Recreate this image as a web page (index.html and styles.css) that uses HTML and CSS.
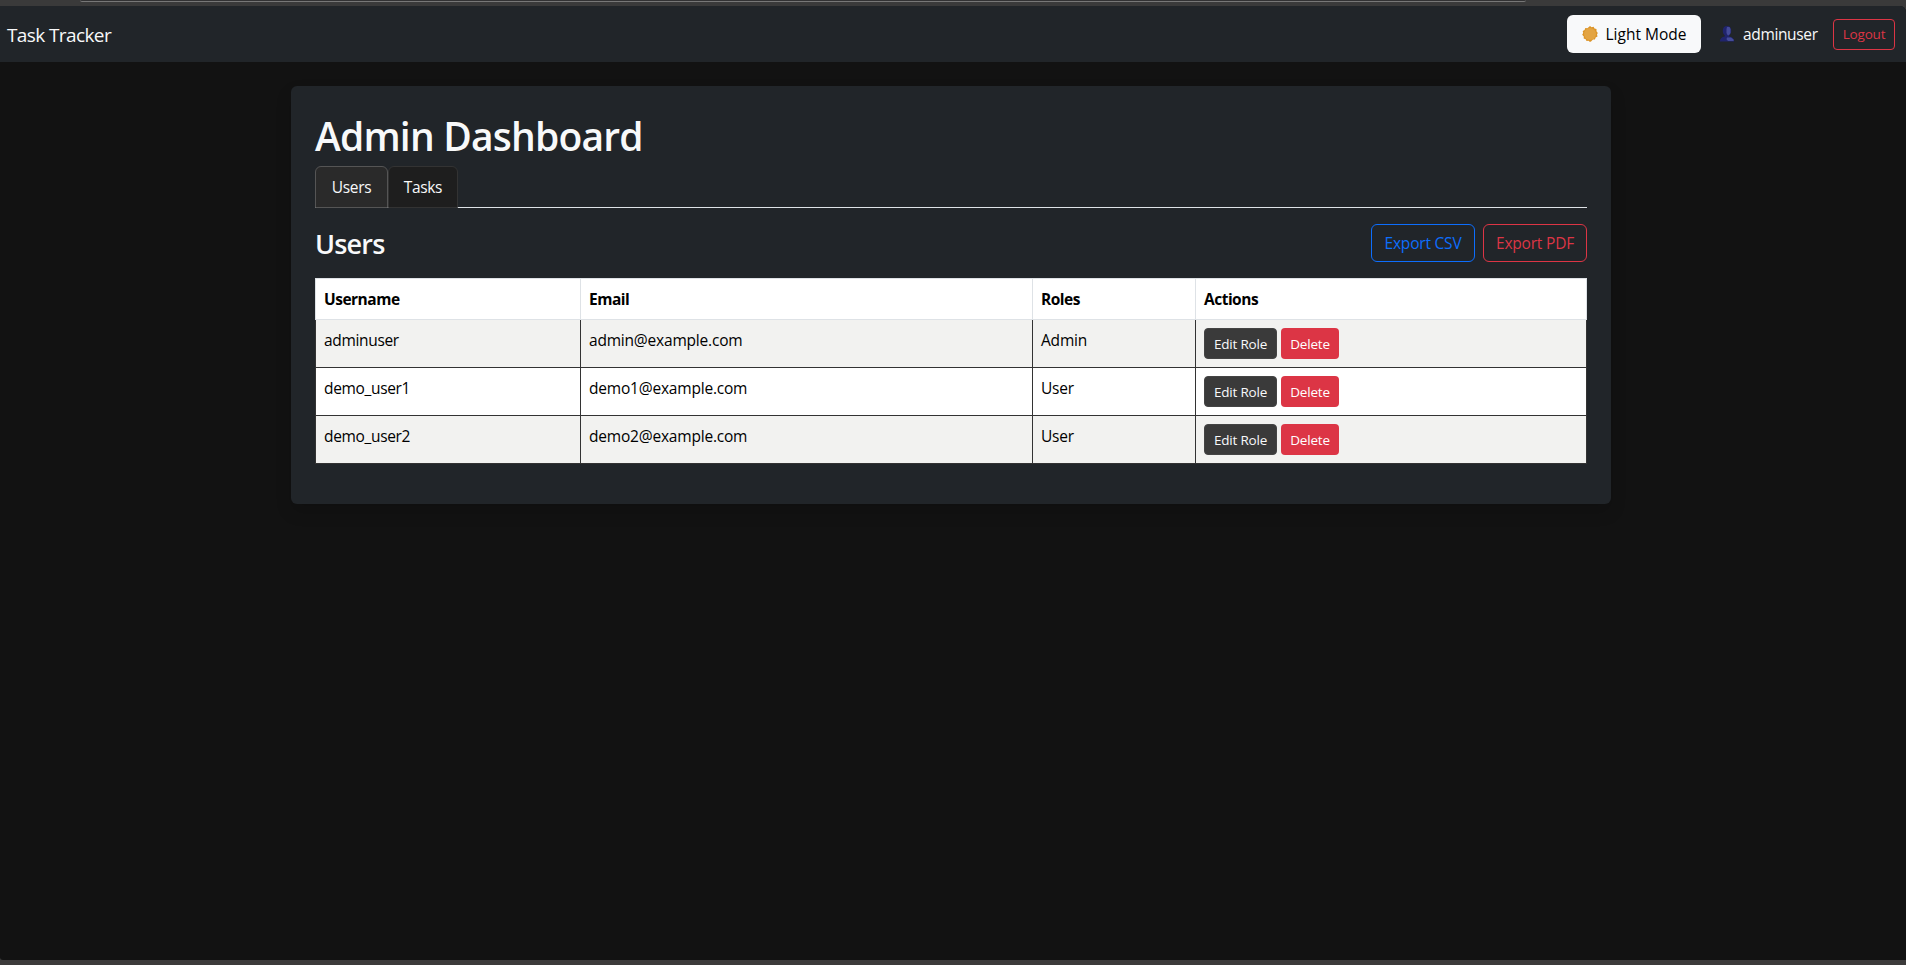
FILE: index.html
```html
<!DOCTYPE html>
<html lang="en">
<head>
<meta charset="utf-8">
<title>Task Tracker</title>
<link rel="stylesheet" href="styles.css">
</head>
<body>
<div class="chrome-top"><div class="address"></div></div>
<div class="page">
  <nav class="navbar">
    <a class="brand">Task Tracker</a>
    <div class="nav-right">
      <button class="btn btn-light">
        <svg class="sun" width="16" height="16" viewBox="0 0 16 16"><path fill="#dc9427" d="M8 0l1.600 1.200 2-.5.9 1.800 2 .6v2.100L15.800 7l-.8 1.600.5 2-1.900.9-.6 2-2.100 0L9.300 15.200 8 16l-1.500-1.200-2 .3-.8-1.900-2-.7.1-2.100L.2 8.800 1.200 7.100.7 5l1.900-.9.7-2 2.100.1z"/><circle cx="8" cy="8" r="6" fill="#e3a442"/></svg>
        <span class="t-mode">Light Mode</span>
      </button>
      <span class="account">
        <svg class="person" width="16" height="16" viewBox="0 0 16 16"><path fill="#20246c" d="M8 0c2.800 0 4.200 2 4.200 4.700 0 2-.8 3.500-1.900 4.500v1.200c2.800.5 4.700 1.900 4.900 5.100H.8c.2-3.200 2.200-4.600 4.900-5.100V9.200C4.500 8.200 3.800 6.700 3.800 4.700 3.800 2 5.200 0 8 0z"/><path fill="#444b99" d="M8 1h2.500l1 2v4L10 9.300H8.600L7.500 7V3zM8 11.500h4l2.600 2v1.500H9L7.500 13.300z"/></svg>
        <span class="t-account">adminuser</span>
      </span>
      <button class="btn btn-sm btn-outline-danger logout">Logout</button>
    </div>
  </nav>
  <main class="card">
    <h1>Admin Dashboard</h1>
    <div class="tabs">
      <a class="tab tab-users active">Users</a>
      <a class="tab tab-tasks">Tasks</a>
    </div>
    <div class="section-head">
      <h3>Users</h3>
      <div class="exports">
        <button class="btn btn-outline-primary">Export CSV</button>
        <button class="btn btn-outline-danger">Export PDF</button>
      </div>
    </div>
    <table class="users">
      <colgroup><col class="c-name"><col class="c-email"><col class="c-role"><col class="c-act"></colgroup>
      <thead><tr><th>Username</th><th>Email</th><th>Roles</th><th>Actions</th></tr></thead>
      <tbody>
        <tr><td>adminuser</td><td>admin@example.com</td><td>Admin</td><td><div class="actions"><button class="btn btn-sm btn-edit">Edit Role</button><button class="btn btn-sm btn-delete">Delete</button></div></td></tr>
        <tr><td>demo_user1</td><td>demo1@example.com</td><td>User</td><td><div class="actions"><button class="btn btn-sm btn-edit">Edit Role</button><button class="btn btn-sm btn-delete">Delete</button></div></td></tr>
        <tr><td>demo_user2</td><td>demo2@example.com</td><td>User</td><td><div class="actions"><button class="btn btn-sm btn-edit">Edit Role</button><button class="btn btn-sm btn-delete">Delete</button></div></td></tr>
      </tbody>
    </table>
  </main>
</div>
<div class="chrome-bottom"></div>
</body>
</html>
```
FILE: styles.css
```css
* { box-sizing: border-box; }
body {
  margin: 0;
  height: 965px;
  display: flex;
  flex-direction: column;
  overflow: hidden;
  background: #3a3a3a;
  color: #f8f9fa;
  font: 15.5px/24px "Open Sans", "Noto Sans", sans-serif;
  letter-spacing: -0.2px;
}
.chrome-top { height: 6px; flex: none; padding: 0 380px 0 80px; }
.address { height: 2px; background: #323233; border-bottom: 1px solid #777; border-radius: 0 0 5px 5px; }
.chrome-bottom { height: 5px; flex: none; background: #3c3b3b; }
.page { flex: 1; background: #121212; border-radius: 0 6px 0 3px; overflow: hidden; }
.navbar {
  height: 56px;
  padding: 0 11px 0 7px;
  display: flex;
  align-items: center;
  justify-content: space-between;
  background: #212529;
}
.brand { padding-top: 2px; font-size: 19px; letter-spacing: -0.6px; white-space: nowrap; }
.nav-right { display: flex; align-items: center; }
.btn {
  height: 38px;
  padding: 0;
  display: flex;
  align-items: center;
  justify-content: center;
  border: 1px solid transparent;
  border-radius: 6px;
  background: none;
  font: inherit;
  letter-spacing: inherit;
  white-space: nowrap;
}
.btn-light { width: 134px; gap: 8px; background: #f8f9fa; color: #000; }
.btn-light .sun { flex: none; }
.t-mode { letter-spacing: 0; }
.account { width: 98px; margin: 0 16px 0 18px; display: flex; align-items: center; gap: 8px; }
.t-account { letter-spacing: -0.35px; }
.person { flex: none; }
.btn-sm { height: 31px; border-radius: 4px; font-size: 13.5px; letter-spacing: -0.2px; }
.btn-outline-danger { border-color: #dc3545; color: #dc3545; }
.btn-outline-primary { border-color: #0d6efd; color: #0d6efd; }
.logout { width: 62px; }
.card {
  width: 1320px;
  height: 418px;
  margin: 24px 0 0 291px;
  padding: 24px;
  border-radius: 6px;
  background: #212529;
  box-shadow: 0 8px 16px rgba(0, 0, 0, 0.15);
}
h1 { margin: 0 0 6px; padding-top: 2px; font-size: 39px; line-height: 48px; font-weight: 600; letter-spacing: -0.8px; }
.tabs { height: 42px; display: flex; border-bottom: 1px solid #dee2e6; }
.tab {
  height: 42px;
  display: flex;
  align-items: center;
  justify-content: center;
  border: 1px solid #333;
  border-radius: 6px 6px 0 0;
  background: #1e1e1e;
  letter-spacing: -0.35px;
}
.tab.active { border-color: #555; background: #2a2a2a; }
.tab-users { width: 73px; }
.tab-tasks { width: 70px; }
.section-head { height: 38px; margin: 16px 0; display: flex; align-items: center; justify-content: space-between; }
h3 { margin: 0; padding-top: 2px; font-size: 27px; line-height: 34px; font-weight: 600; letter-spacing: -0.8px; }
.exports { display: flex; gap: 8px; }
.exports .btn { width: 104px; }
.users { width: 1271px; table-layout: fixed; border-collapse: collapse; color: #000; }
.c-name { width: 265px; }
.c-email { width: 452px; }
.c-role { width: 163px; }
.c-act { width: 391px; }
.users th, .users td { padding: 8px; text-align: left; vertical-align: top; }
.users th { height: 41px; border: 1px solid #dee2e6; background: #fff; font-weight: 700; letter-spacing: -0.5px; }
.users td { height: 48px; border: 1px solid #333; background: #fff; }
.users td:first-child { letter-spacing: -0.33px; }
.users tbody tr:first-child td { border-top-color: #dee2e6; }
.users tbody tr:nth-child(odd) td { background: #f2f2f0; }
.actions { display: flex; gap: 4px; }
.btn-edit { width: 73px; border-color: #444; background: #3a3a3a; color: #f8f9fa; }
.btn-delete { width: 58px; background: #dc3545; color: #fff; }
```
